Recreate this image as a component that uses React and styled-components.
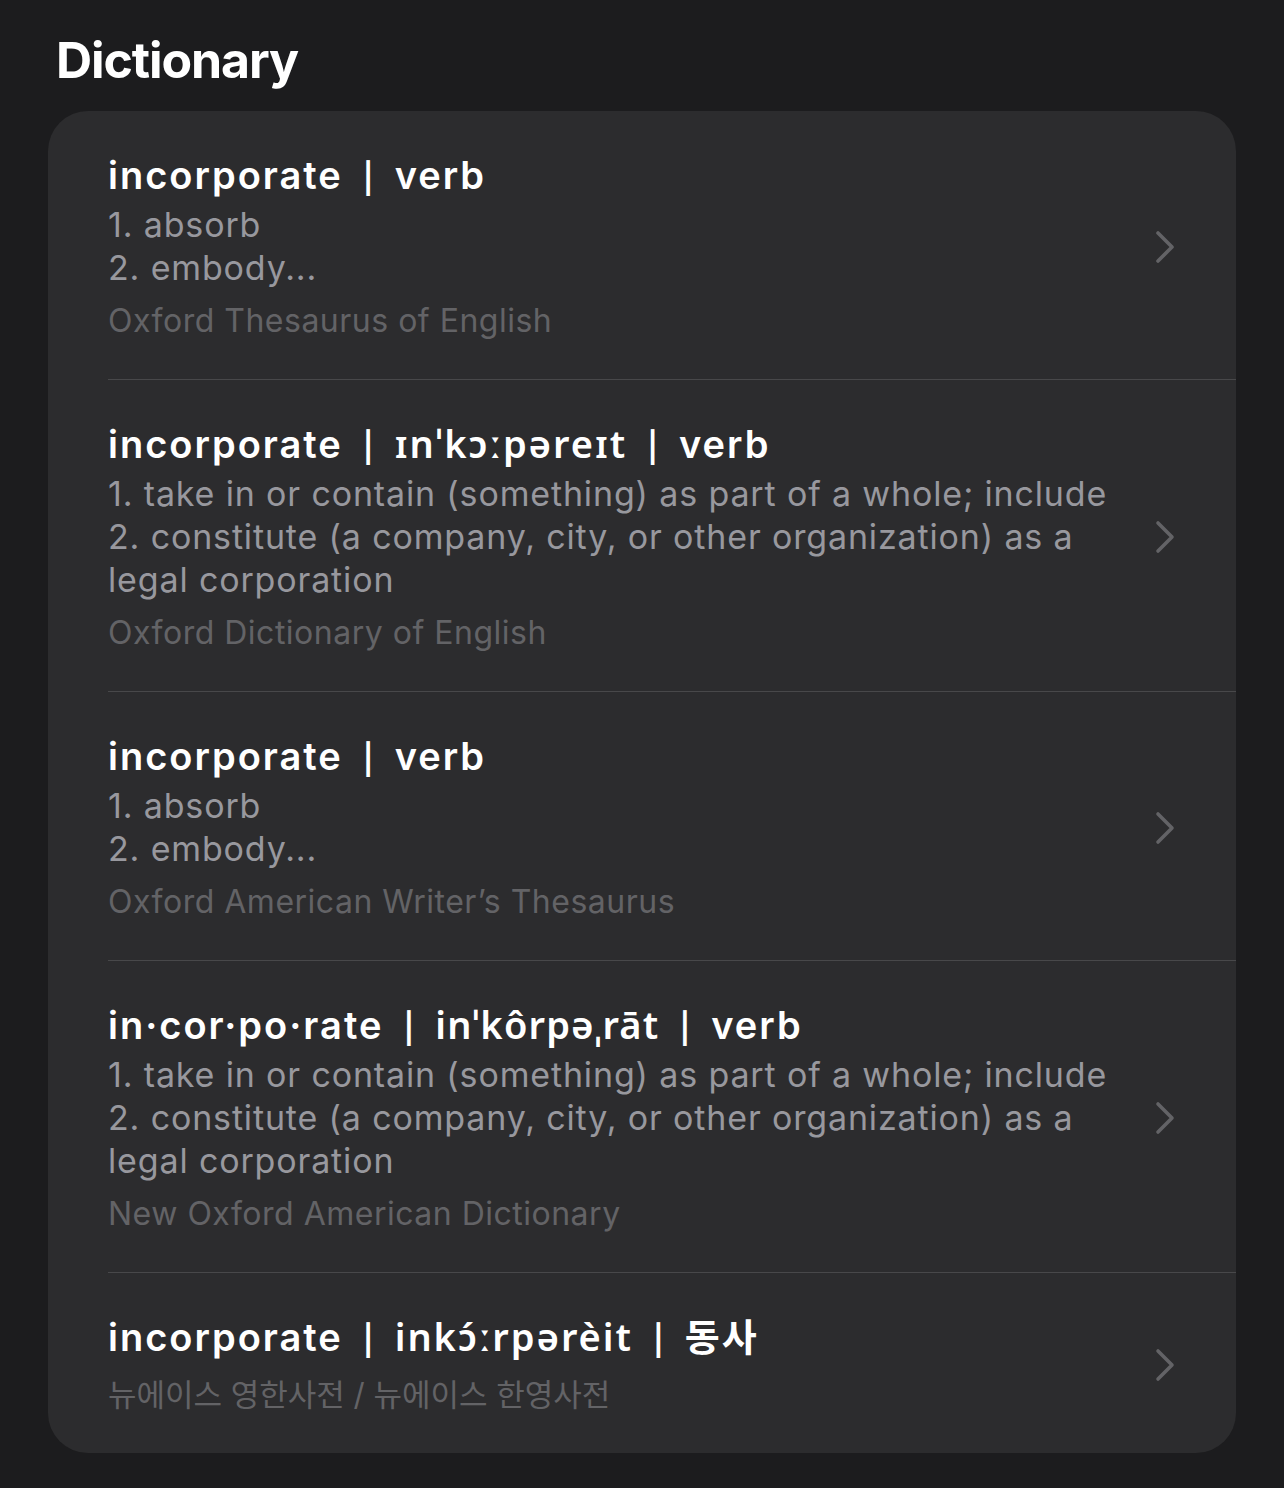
import React from "react";
import styled, { createGlobalStyle } from "styled-components";

const GlobalStyle = createGlobalStyle`
  html, body { margin: 0; padding: 0; background: #1c1c1e; }
  body { font-family: Inter, "Noto Sans", "Noto Sans CJK KR", sans-serif; -webkit-font-smoothing: antialiased; }
`;

const Page = styled.div`
  min-height: 1488px;
  box-sizing: border-box;
  padding: 30px 48px 34px;
  background: #1c1c1e;
`;

const Heading = styled.h1`
  margin: 0 0 21px 8px;
  font-size: 50px;
  line-height: 60px;
  font-weight: 700;
  color: #ffffff;
  letter-spacing: -1.1px;
`;

const Card = styled.div`
  background: #2c2c2e;
  border-radius: 40px;
  overflow: hidden;
`;

const Row = styled.div`
  padding-left: 60px;
`;

const RowInner = styled.div`
  display: flex;
  align-items: center;
  padding: 41px 61px 38px 0;
  border-bottom: ${(p) => (p.$last ? "none" : "1px solid #48484a")};
`;

const Content = styled.div`
  flex: 1;
  min-width: 0;
  padding-right: 30px;
`;

const Title = styled.div`
  font-size: 38px;
  line-height: 46px;
  height: 46px;
  font-weight: 600;
  color: #ffffff;
  white-space: nowrap;
  letter-spacing: 2px;
`;

const Sep = styled.span`
  margin: 0 21px 0 20px;
  font-size: 30px;
  line-height: 0;
  font-weight: 600;
  letter-spacing: 0;
`;

const Pron = styled.span`
  font-family: "Noto Sans", Inter, sans-serif;
  letter-spacing: ${(p) => (p.$tight ? "1.2px" : "2px")};
  line-height: 0;
`;

const Defs = styled.div`
  margin-top: 5px;
  font-size: 34px;
  line-height: 43px;
  color: #98989e;
  letter-spacing: 0.85px;
`;

const Source = styled.div`
  margin-top: ${(p) => (p.$ko ? "15px" : "12px")};
  font-size: ${(p) => (p.$ko ? "31px" : "32px")};
  line-height: 40px;
  color: #636366;
  letter-spacing: ${(p) => (p.$ko ? "0px" : "0.5px")};
`;

const Chevron = () => (
  <svg width="20" height="34" viewBox="0 0 20 34" fill="none">
    <path d="M3 3 L17 17 L3 31" stroke="#636366" strokeWidth="3.6" strokeLinecap="round" strokeLinejoin="round" />
  </svg>
);

const entries = [
  {
    word: "incorporate",
    parts: ["verb"],
    defs: ["1. absorb", "2. embody..."],
    source: "Oxford Thesaurus of English",
  },
  {
    word: "incorporate",
    pron: "ɪnˈkɔːpəreɪt",
    parts: ["verb"],
    defs: [
      "1. take in or contain (something) as part of a whole; include",
      "2. constitute (a company, city, or other organization) as a legal corporation",
    ],
    source: "Oxford Dictionary of English",
  },
  {
    word: "incorporate",
    parts: ["verb"],
    defs: ["1. absorb", "2. embody..."],
    source: "Oxford American Writer’s Thesaurus",
  },
  {
    word: "in·cor·po·rate",
    pron: "inˈkôrpəˌrāt",
    tight: true,
    parts: ["verb"],
    defs: [
      "1. take in or contain (something) as part of a whole; include",
      "2. constitute (a company, city, or other organization) as a legal corporation",
    ],
    source: "New Oxford American Dictionary",
  },
  {
    word: "incorporate",
    pron: "inkɔ́ːrpərèit",
    parts: ["동사"],
    defs: [],
    source: "뉴에이스 영한사전 / 뉴에이스 한영사전",
    ko: true,
  },
];

export default function App() {
  return (
    <>
      <GlobalStyle />
      <Page>
        <Heading>Dictionary</Heading>
        <Card>
          {entries.map((e, i) => (
            <Row key={i}>
              <RowInner $last={i === entries.length - 1}>
                <Content>
                  <Title>
                    {e.word}
                    {e.pron && (
                      <>
                        <Sep>|</Sep>
                        <Pron $tight={e.tight}>{e.pron}</Pron>
                      </>
                    )}
                    {e.parts.map((t, j) => (
                      <React.Fragment key={j}>
                        <Sep>|</Sep>
                        {t}
                      </React.Fragment>
                    ))}
                  </Title>
                  {e.defs.length > 0 && (
                    <Defs>
                      {e.defs.map((d, j) => (
                        <div key={j}>{d}</div>
                      ))}
                    </Defs>
                  )}
                  <Source $ko={e.ko}>{e.source}</Source>
                </Content>
                <Chevron />
              </RowInner>
            </Row>
          ))}
        </Card>
      </Page>
    </>
  );
}
